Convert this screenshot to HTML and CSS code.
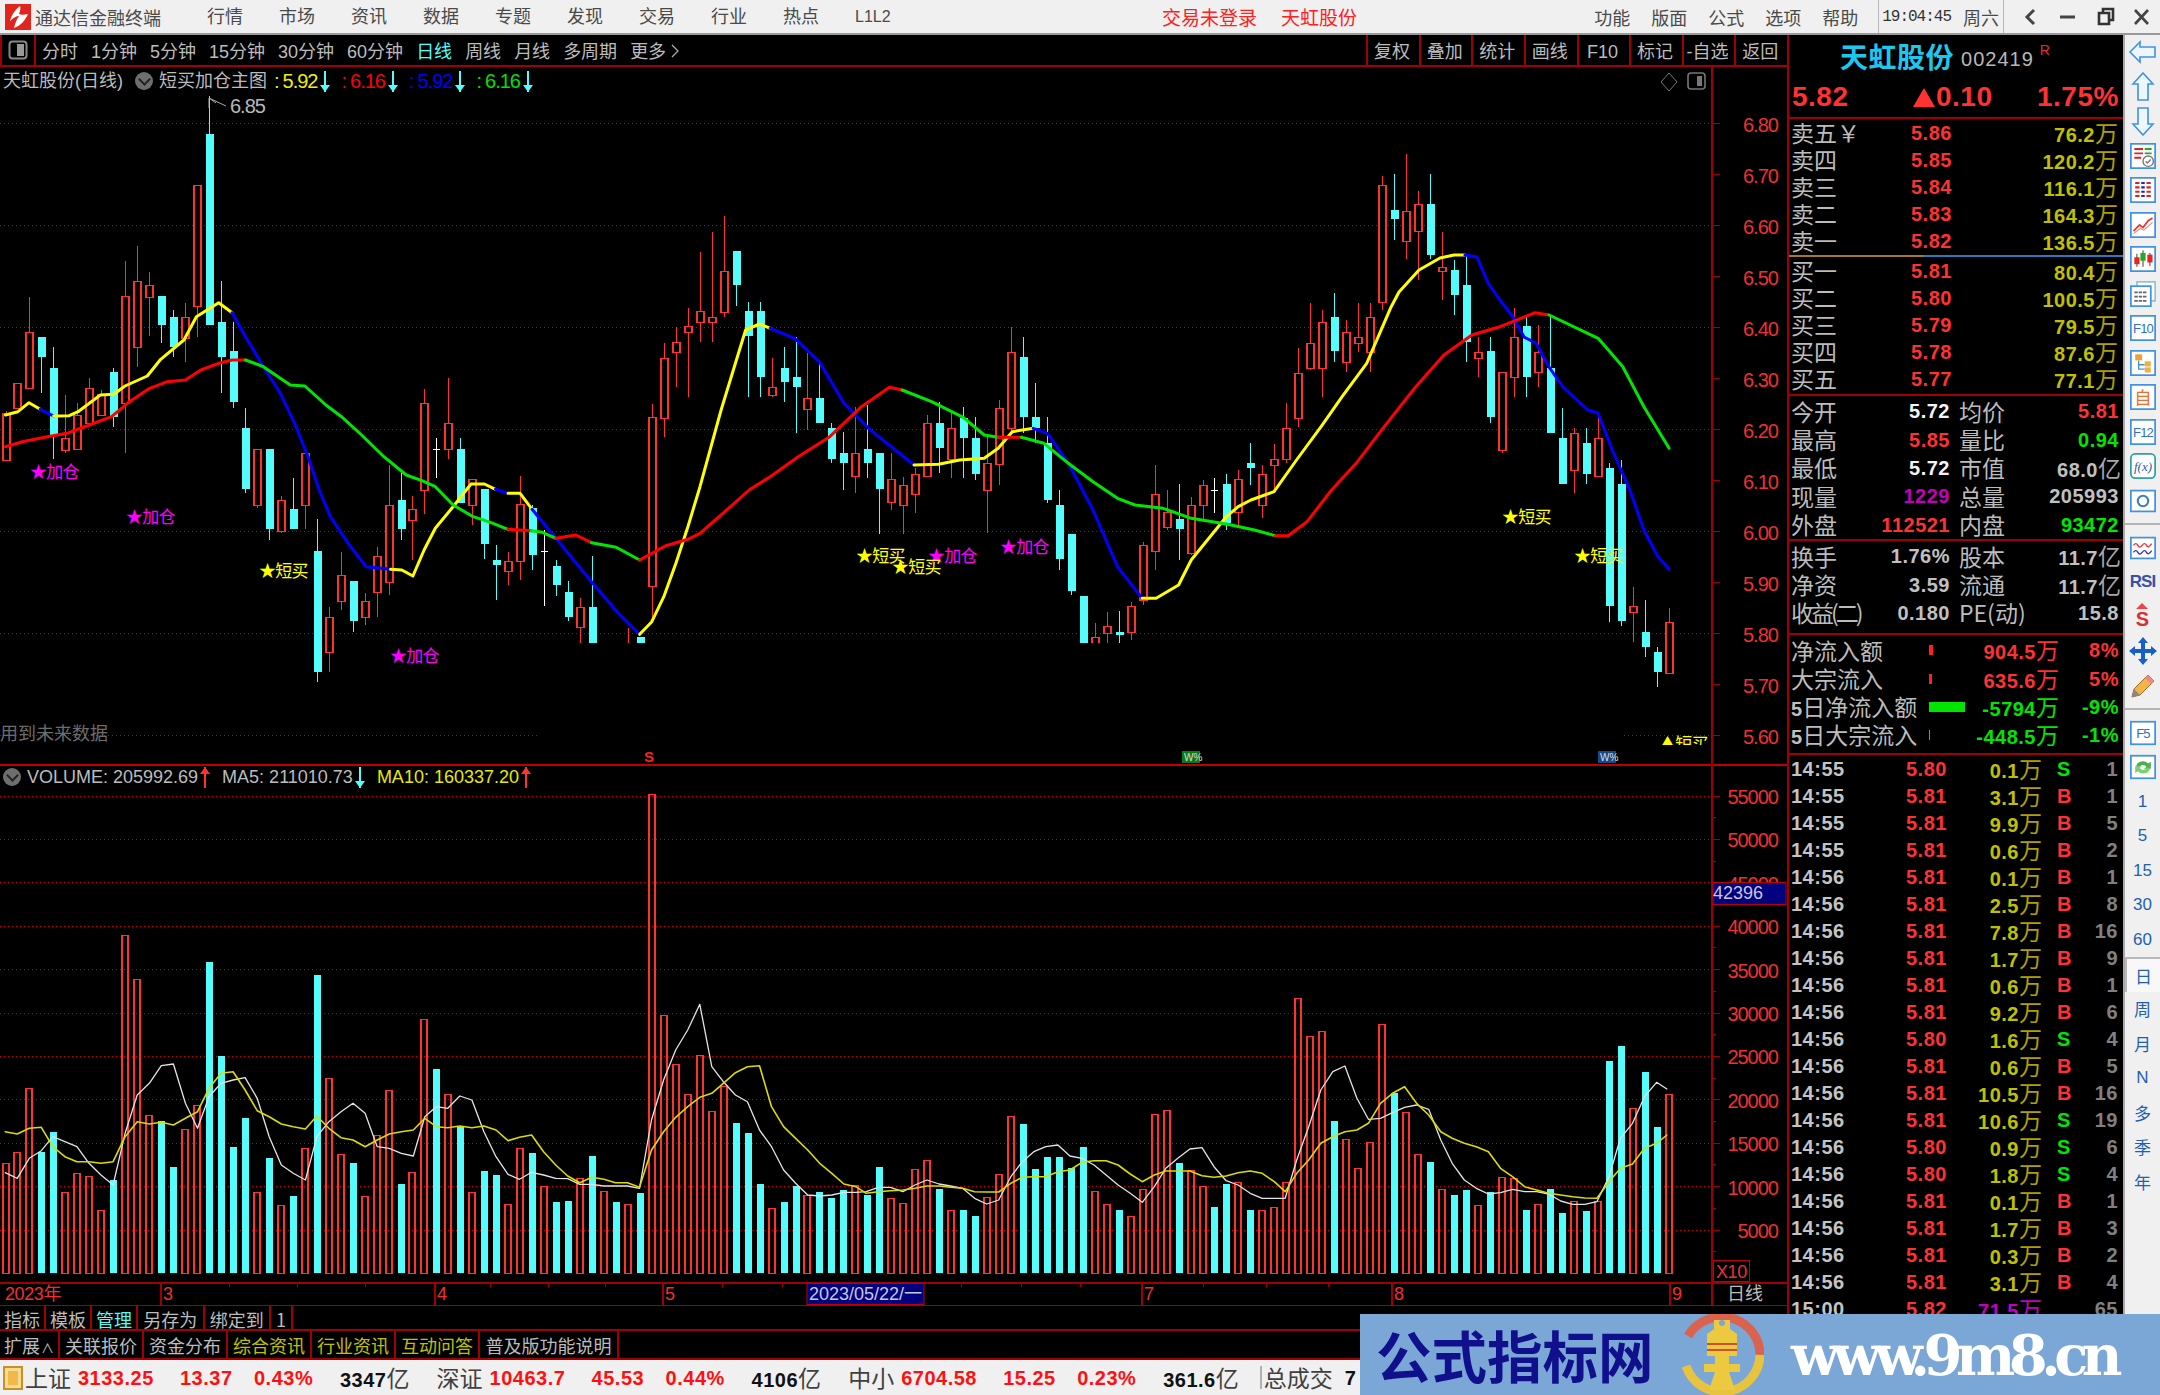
FILE: index.html
```html
<!DOCTYPE html>
<html lang="zh-CN">
<head>
<meta charset="utf-8">
<title>通达信金融终端</title>
<link rel="stylesheet" href="styles.css">
</head>
<body>
<div class="app">
  <header class="topbar">
    <svg class="logo" width="26" height="26" viewBox="0 0 26 26"><rect width="26" height="26" fill="#e0261c"/><path d="M15 2 C10 6 7 10 5 17 C9 13 12 12 14 12 C12 15 10 19 9 24 C15 22 20 17 23 10 C19 11 16 11 14 10 C15 7 16 4 15 2Z" fill="#fff"/></svg>
    <span class="title">通达信金融终端</span>
    <nav class="menu">
      <span>行情</span><span>市场</span><span>资讯</span><span>数据</span><span>专题</span><span>发现</span><span>交易</span><span>行业</span><span>热点</span><span class="l1l2">L1L2</span>
    </nav>
    <span class="alert first">交易未登录</span>
    <span class="alert second">天虹股份</span>
    <div class="topright">
      <nav class="menu2"><span>功能</span><span>版面</span><span>公式</span><span>选项</span><span>帮助</span></nav>
      <div class="clock"><span class="time">19:04:45</span><span>周六</span></div>
      <div class="winbtns">
        <svg width="37" height="24" viewBox="0 0 37 24"><path d="M22 5 L15 12 L22 19" fill="none" stroke="#444" stroke-width="3"/></svg>
        <svg width="37" height="24" viewBox="0 0 37 24"><path d="M11 12 H26" stroke="#444" stroke-width="3"/></svg>
        <svg width="37" height="24" viewBox="0 0 37 24"><path d="M13 8 H23 V19 H13 Z M17 8 V4 H27 V15 H23" fill="none" stroke="#333" stroke-width="2.6"/></svg>
        <svg width="37" height="24" viewBox="0 0 37 24"><path d="M12 5 L25 19 M25 5 L12 19" stroke="#444" stroke-width="2.6"/></svg>
      </div>
    </div>
  </header>

  <div class="workspace">
    <main class="leftcol">
      <div class="toolbar">
        <div class="panelbtn"><svg width="20" height="20" viewBox="0 0 20 20"><rect x="1.5" y="1.5" width="17" height="17" rx="3" fill="none" stroke="#888" stroke-width="2"/><rect x="9" y="4" width="7" height="12" fill="#999"/></svg></div>
        <nav class="periods">
          <span>分时</span><span>1分钟</span><span>5分钟</span><span>15分钟</span><span>30分钟</span><span>60分钟</span><span class="active">日线</span><span>周线</span><span>月线</span><span>多周期</span><span>更多 <svg width="8" height="14" viewBox="0 0 8 14"><path d="M1 1 L7 7 L1 13" fill="none" stroke="#aaa" stroke-width="1.3"/></svg></span>
        </nav>
        <nav class="chartbtns">
          <span>复权</span><span>叠加</span><span>统计</span><span>画线</span><span>F10</span><span>标记</span><span>-自选</span><span>返回</span>
        </nav>
      </div>
      <div class="chartwrap">
        <svg id="chart" width="1787" height="1239" viewBox="0 67 1787 1239"></svg>
        <div class="legend mainlegend">
          <span>天虹股份(日线)</span>
          <i class="chev"></i>
          <span>短买加仓主图</span>
          <span class="val yellow lead"><i class="colon">:</i>5.92</span><i class="arr down"></i>
          <span class="val red"><i class="colon">:</i>6.16</span><i class="arr down"></i>
          <span class="val blue"><i class="colon">:</i>5.92</span><i class="arr down"></i>
          <span class="val green"><i class="colon">:</i>6.16</span><i class="arr down"></i>
        </div>
        <div class="legend vollegend">
          <i class="chev"></i>
          <span class="volt">VOLUME: 205992.69</span><i class="arr up"></i>
          <span class="volt">MA5: 211010.73</span><i class="arr down"></i>
          <span class="volt yellow">MA10: 160337.20</span><i class="arr up"></i>
        </div>
      </div>
      <div class="tools">
        <span>指标</span><span>模板</span><span class="cyan">管理</span><span>另存为</span><span>绑定到</span><span class="one">1</span>
      </div>
      <div class="tabs">
        <span class="t1">扩展<small>∧</small></span><span>关联报价</span><span>资金分布</span><span class="olive">综合资讯</span><span class="olive">行业资讯</span><span class="olive">互动问答</span><span class="t7">普及版功能说明</span>
      </div>
    </main>

    <aside class="panel">
      <section class="head">
        <div class="namerow"><span class="stock">天虹股份</span><span class="code">002419</span><sup class="rflag">R</sup></div>
        <div class="pricerow"><span class="p1">5.82</span><span class="p2"><i class="tri"></i>0.10</span><span class="p3">1.75%</span></div>
      </section>
      <section class="quotes">
        <div class="q"><span class="cn">卖五<span class="yen">￥</span></span><b class="rd">5.86</b><b class="ol">76.2<span class="cn">万</span></b></div>
        <div class="q"><span class="cn">卖四</span><b class="rd">5.85</b><b class="ol">120.2<span class="cn">万</span></b></div>
        <div class="q"><span class="cn">卖三</span><b class="rd">5.84</b><b class="ol">116.1<span class="cn">万</span></b></div>
        <div class="q"><span class="cn">卖二</span><b class="rd">5.83</b><b class="ol">164.3<span class="cn">万</span></b></div>
        <div class="q"><span class="cn">卖一</span><b class="rd">5.82</b><b class="ol">136.5<span class="cn">万</span></b></div>
      </section>
      <div class="split"></div>
      <section class="quotes buy">
        <div class="q"><span class="cn">买一</span><b class="rd">5.81</b><b class="ol">80.4<span class="cn">万</span></b></div>
        <div class="q"><span class="cn">买二</span><b class="rd">5.80</b><b class="ol">100.5<span class="cn">万</span></b></div>
        <div class="q"><span class="cn">买三</span><b class="rd">5.79</b><b class="ol">79.5<span class="cn">万</span></b></div>
        <div class="q"><span class="cn">买四</span><b class="rd">5.78</b><b class="ol">87.6<span class="cn">万</span></b></div>
        <div class="q"><span class="cn">买五</span><b class="rd">5.77</b><b class="ol">77.1<span class="cn">万</span></b></div>
      </section>
      <section class="stats s1">
        <div class="s"><span class="cn">今开</span><b class="wh">5.72</b><span class="cn l2">均价</span><b class="rd">5.81</b></div>
        <div class="s"><span class="cn">最高</span><b class="rd">5.85</b><span class="cn l2">量比</span><b class="gr">0.94</b></div>
        <div class="s"><span class="cn">最低</span><b class="wh">5.72</b><span class="cn l2">市值</span><b class="gy">68.0<span class="cn">亿</span></b></div>
        <div class="s"><span class="cn">现量</span><b class="mg">1229</b><span class="cn l2">总量</span><b class="gy">205993</b></div>
        <div class="s"><span class="cn">外盘</span><b class="rd">112521</b><span class="cn l2">内盘</span><b class="gr">93472</b></div>
      </section>
      <section class="stats s2">
        <div class="s"><span class="cn">换手</span><b class="gy">1.76%</b><span class="cn l2">股本</span><b class="gy">11.7<span class="cn">亿</span></b></div>
        <div class="s"><span class="cn">净资</span><b class="gy">3.59</b><span class="cn l2">流通</span><b class="gy">11.7<span class="cn">亿</span></b></div>
        <div class="s"><span class="cn tight">收益(二)</span><b class="gy">0.180</b><span class="cn l2">PE(动)</span><b class="gy">15.8</b></div>
      </section>
      <section class="flows">
        <div class="f"><span class="cn">净流入额</span><i class="fbar"><i class="fill r" style="width:4px"></i></i><b class="rd">904.5<span class="cn">万</span></b><b class="rd">8%</b></div>
        <div class="f"><span class="cn">大宗流入</span><i class="fbar"><i class="fill r" style="width:3px"></i></i><b class="rd">635.6<span class="cn">万</span></b><b class="rd">5%</b></div>
        <div class="f"><span class="cn"><b class="gy">5</b>日净流入额</span><i class="fbar"><i class="fill g" style="width:36px"></i></i><b class="gr">-5794<span class="cn">万</span></b><b class="gr">-9%</b></div>
        <div class="f"><span class="cn"><b class="gy">5</b>日大宗流入</span><i class="fbar"><i class="fill g" style="width:1px"></i></i><b class="gr">-448.5<span class="cn">万</span></b><b class="gr">-1%</b></div>
      </section>
      <section class="ticks">
        <div class="k"><b>14:55</b><b class="rd">5.80</b><b class="ol">0.1<span class="cn">万</span></b><b class="gr">S</b><b class="ct">1</b></div>
        <div class="k"><b>14:55</b><b class="rd">5.81</b><b class="ol">3.1<span class="cn">万</span></b><b class="rd">B</b><b class="ct">1</b></div>
        <div class="k"><b>14:55</b><b class="rd">5.81</b><b class="ol">9.9<span class="cn">万</span></b><b class="rd">B</b><b class="ct">5</b></div>
        <div class="k"><b>14:55</b><b class="rd">5.81</b><b class="ol">0.6<span class="cn">万</span></b><b class="rd">B</b><b class="ct">2</b></div>
        <div class="k"><b>14:56</b><b class="rd">5.81</b><b class="ol">0.1<span class="cn">万</span></b><b class="rd">B</b><b class="ct">1</b></div>
        <div class="k"><b>14:56</b><b class="rd">5.81</b><b class="ol">2.5<span class="cn">万</span></b><b class="rd">B</b><b class="ct">8</b></div>
        <div class="k"><b>14:56</b><b class="rd">5.81</b><b class="ol">7.8<span class="cn">万</span></b><b class="rd">B</b><b class="ct">16</b></div>
        <div class="k"><b>14:56</b><b class="rd">5.81</b><b class="ol">1.7<span class="cn">万</span></b><b class="rd">B</b><b class="ct">9</b></div>
        <div class="k"><b>14:56</b><b class="rd">5.81</b><b class="ol">0.6<span class="cn">万</span></b><b class="rd">B</b><b class="ct">1</b></div>
        <div class="k"><b>14:56</b><b class="rd">5.81</b><b class="ol">9.2<span class="cn">万</span></b><b class="rd">B</b><b class="ct">6</b></div>
        <div class="k"><b>14:56</b><b class="rd">5.80</b><b class="ol">1.6<span class="cn">万</span></b><b class="gr">S</b><b class="ct">4</b></div>
        <div class="k"><b>14:56</b><b class="rd">5.81</b><b class="ol">0.6<span class="cn">万</span></b><b class="rd">B</b><b class="ct">5</b></div>
        <div class="k"><b>14:56</b><b class="rd">5.81</b><b class="ol">10.5<span class="cn">万</span></b><b class="rd">B</b><b class="ct">16</b></div>
        <div class="k"><b>14:56</b><b class="rd">5.81</b><b class="ol">10.6<span class="cn">万</span></b><b class="gr">S</b><b class="ct">19</b></div>
        <div class="k"><b>14:56</b><b class="rd">5.80</b><b class="ol">0.9<span class="cn">万</span></b><b class="gr">S</b><b class="ct">6</b></div>
        <div class="k"><b>14:56</b><b class="rd">5.80</b><b class="ol">1.8<span class="cn">万</span></b><b class="gr">S</b><b class="ct">4</b></div>
        <div class="k"><b>14:56</b><b class="rd">5.81</b><b class="ol">0.1<span class="cn">万</span></b><b class="rd">B</b><b class="ct">1</b></div>
        <div class="k"><b>14:56</b><b class="rd">5.81</b><b class="ol">1.7<span class="cn">万</span></b><b class="rd">B</b><b class="ct">3</b></div>
        <div class="k"><b>14:56</b><b class="rd">5.81</b><b class="ol">0.3<span class="cn">万</span></b><b class="rd">B</b><b class="ct">2</b></div>
        <div class="k"><b>14:56</b><b class="rd">5.81</b><b class="ol">3.1<span class="cn">万</span></b><b class="rd">B</b><b class="ct">4</b></div>
        <div class="k"><b>15:00</b><b class="rd">5.82</b><b class="mg">71.5<span class="cn">万</span></b><b></b><b class="ct">65</b></div>
      </section>
    </aside>

    <aside class="sidebar">
      <div class="ti"><svg width="30" height="24" viewBox="0 0 30 24"><path d="M2 12 L12 2 V7 H27 V17 H12 V22 Z" fill="#eef6ff" stroke="#3f93e0" stroke-width="1.6"/></svg></div>
      <div class="ti"><svg width="24" height="30" viewBox="0 0 24 30"><path d="M12 1 L22 12 H17 V28 H7 V12 H2 Z" fill="#eef6ff" stroke="#3f93e0" stroke-width="1.6"/></svg></div>
      <div class="ti"><svg width="24" height="30" viewBox="0 0 24 30"><path d="M12 29 L22 18 H17 V2 H7 V18 H2 Z" fill="#eef6ff" stroke="#3f93e0" stroke-width="1.6"/></svg></div>
      <div class="ti"><svg class="box" viewBox="0 0 30 30"><rect x="1" y="1" width="28" height="28" fill="#fff" stroke="#3f93e0" stroke-width="2"/><path d="M5 7h10M5 12h10M5 17h8" stroke="#d22" stroke-width="2.2"/><path d="M17 7h8M17 12h8" stroke="#2a2" stroke-width="2.2"/><circle cx="21" cy="21" r="6" fill="#fff" stroke="#777" stroke-width="1.6"/><path d="M18 21l2 2 4-4" fill="none" stroke="#777" stroke-width="1.6"/></svg></div>
      <div class="ti"><svg class="box" viewBox="0 0 30 30"><rect x="1" y="1" width="28" height="28" fill="#fff" stroke="#3f93e0" stroke-width="2"/><path d="M6 7h5M6 12h5M6 17h5M6 22h5" stroke="#d22" stroke-width="2.4"/><path d="M13 7h4M13 12h4M13 17h4M13 22h4" stroke="#22a" stroke-width="2.4"/><path d="M19 7h5M19 12h5M19 17h5M19 22h5" stroke="#d22" stroke-width="2.4"/></svg></div>
      <div class="ti"><svg class="box" viewBox="0 0 30 30"><rect x="1" y="1" width="28" height="28" fill="#fff" stroke="#3f93e0" stroke-width="2"/><path d="M4 22 L11 15 L15 18 L21 10 L26 7" fill="none" stroke="#e33" stroke-width="2"/><path d="M4 25 L12 19 L16 21 L26 12" fill="none" stroke="#e88" stroke-width="1.2"/></svg></div>
      <div class="ti"><svg class="box" viewBox="0 0 30 30"><rect x="1" y="1" width="28" height="28" fill="#fff" stroke="#3f93e0" stroke-width="2"/><path d="M8 9v15M15 5v19M23 8v15" stroke="#222" stroke-width="1"/><rect x="5" y="13" width="6" height="8" fill="#e22"/><rect x="12" y="8" width="6" height="9" fill="#2a2"/><rect x="20" y="10" width="6" height="9" fill="#e22"/></svg></div>
      <div class="ti"><svg class="box" viewBox="0 0 30 30"><rect x="8" y="1" width="21" height="22" fill="#fff" stroke="#7fb2e0" stroke-width="1.6"/><rect x="1" y="6" width="23" height="23" fill="#fff" stroke="#3f93e0" stroke-width="2"/><path d="M5 13h15M5 18h15M5 23h15" stroke="#666" stroke-width="2" stroke-dasharray="4 1"/></svg></div>
      <div class="ti"><svg class="box" viewBox="0 0 30 30"><rect x="1" y="1" width="28" height="28" fill="#fff" stroke="#3f93e0" stroke-width="2"/><text x="15" y="21" class="ict">F10</text></svg></div>
      <div class="ti"><svg class="box" viewBox="0 0 30 30"><rect x="1" y="1" width="28" height="28" fill="#fff" stroke="#3f93e0" stroke-width="2"/><path d="M10 12V22H17M10 17H17" fill="none" stroke="#3f93e0" stroke-width="1.5"/><rect x="6" y="5" width="8" height="7" fill="#f0a030"/><rect x="17" y="13" width="7" height="6" fill="#f0b040"/><rect x="17" y="20" width="7" height="6" fill="#f0b040"/></svg></div>
      <div class="ti"><svg class="box" viewBox="0 0 30 30"><rect x="1" y="1" width="28" height="28" fill="#fff" stroke="#3f93e0" stroke-width="2"/><text x="15" y="23" class="icz">自</text></svg></div>
      <div class="ti"><svg class="box" viewBox="0 0 30 30"><rect x="1" y="1" width="28" height="28" fill="#fff" stroke="#3f93e0" stroke-width="2"/><text x="15" y="21" class="ict">F12</text></svg></div>
      <div class="ti"><svg class="box" viewBox="0 0 30 30"><rect x="1" y="1" width="28" height="28" rx="5" fill="#fff" stroke="#30a0a0" stroke-width="2"/><text x="15" y="21" class="icf">f(x)</text></svg></div>
      <div class="ti"><svg class="box" viewBox="0 0 30 30"><rect x="1" y="3" width="28" height="24" fill="#fff" stroke="#3f93e0" stroke-width="2"/><circle cx="15" cy="15" r="6" fill="none" stroke="#3f7fc0" stroke-width="2.4"/></svg></div>
      <div class="tsep"></div>
      <div class="ti"><svg class="box" viewBox="0 0 30 30"><rect x="1" y="3" width="28" height="24" fill="#fff" stroke="#3f93e0" stroke-width="2"/><path d="M4 12q3-4 5 0t5 0 5 0 6-2" fill="none" stroke="#e33" stroke-width="1.6"/><path d="M4 20q3-4 5 0t5 0 5 0 6-2" fill="none" stroke="#33c" stroke-width="1.6"/></svg></div>
      <div class="ti txt rsi">RSI</div>
      <div class="ti dollar"><i class="up-tip"></i>S</div>
      <div class="ti"><svg width="28" height="28" viewBox="0 0 28 28"><path d="M14 0 L19 6 H16 V12 H22 V9 L28 14 L22 19 V16 H16 V22 H19 L14 28 L9 22 H12 V16 H6 V19 L0 14 L6 9 V12 H12 V6 H9 Z" fill="#1560c8"/></svg></div>
      <div class="ti"><svg width="26" height="26" viewBox="0 0 26 26"><path d="M2 24 L4 16 L18 2 L24 8 L10 22 Z" fill="#f3b54a" stroke="#a06c20"/><path d="M18 2 L24 8 L21 11 L15 5Z" fill="#e88"/><path d="M2 24 L4 16 L10 22 Z" fill="#888"/></svg></div>
      <div class="tsep"></div>
      <div class="ti"><svg class="box" viewBox="0 0 30 30"><rect x="1" y="2" width="28" height="26" fill="#fff" stroke="#3f93e0" stroke-width="2"/><text x="15" y="21" class="ict">F5</text></svg></div>
      <div class="ti"><svg class="box" viewBox="0 0 30 30"><rect x="1" y="2" width="28" height="26" fill="#fff" stroke="#3f93e0" stroke-width="2"/><path d="M7 14a8 7 0 0 1 14-3l3-2v8h-8l3-2a5 5 0 0 0-9 1Z" fill="#4cb050"/><path d="M23 17a8 7 0 0 1-14 3l-3 2v-8h8l-3 2a5 5 0 0 0 9-1Z" fill="#7ccf70"/></svg></div>
      <div class="ti txt">1</div><div class="ti txt">5</div><div class="ti txt">15</div><div class="ti txt">30</div><div class="ti txt">60</div>
      <div class="ti txt sel">日</div><div class="ti txt">周</div><div class="ti txt">月</div><div class="ti txt">N</div><div class="ti txt">多</div><div class="ti txt">季</div><div class="ti txt">年</div>
    </aside>
  </div>

  <footer class="statusbar">
    <i class="sicon"></i>
    <span class="n cn">上证</span><b class="v">3133.25</b><b class="c">13.37</b><b class="pc">0.43%</b><b class="a">3347<span class="cn">亿</span></b>
    <span class="n cn">深证</span><b class="v">10463.7</b><b class="c">45.53</b><b class="pc">0.44%</b><b class="a">4106<span class="cn">亿</span></b>
    <span class="n cn">中小</span><b class="v">6704.58</b><b class="c">15.25</b><b class="pc">0.23%</b><b class="a">361.6<span class="cn">亿</span></b>
    <span class="total cn">总成交</span><b class="a tv">7</b>
  </footer>

  <div class="watermark">
    <span class="wm-cn">公式指标网</span>
    <svg class="wm-logo" width="84" height="81" viewBox="0 0 84 81">
      <path d="M42 3 A38 38 0 0 1 80 41" fill="none" stroke="#d9634f" stroke-width="9"/>
      <path d="M42 3 A38 38 0 0 0 8 22" fill="none" stroke="#d9634f" stroke-width="9"/>
      <path d="M80 41 A38 38 0 0 1 6 52" fill="none" stroke="#e8c340" stroke-width="9"/>
      <path d="M34 6 H50 V15 L57 20 V42 H49 V50 H60 V58 H49 L55 76 H29 L35 58 H24 V50 H35 V42 H27 V20 L34 15 Z" fill="#ecc93f"/>
      <circle cx="42" cy="9" r="3" fill="#7ba7d7"/>
      <path d="M27 30 H57 M27 36 H57" stroke="#c9522f" stroke-width="2"/>
    </svg>
    <span class="wm-url">www.9m8.cn</span>
  </div>
</div>
<script src="chart.js"></script>
</body>
</html>
```
FILE: styles.css
```css
* { box-sizing: border-box; }
html, body { margin: 0; width: 2160px; height: 1395px; overflow: hidden; background: #000; }
body { font-family: "Noto Sans CJK SC", "Liberation Sans", sans-serif; }
i { display: inline-block; font-style: normal; }
b { font-weight: 700; }

.app { position: relative; width: 2160px; height: 1395px; display: flex; flex-direction: column; }

/* title bar */
.topbar { height: 35px; flex: none; display: flex; align-items: center; background: #f0f0f0; border-bottom: 2px solid #9a9a9a; color: #4a4a4a; font-size: 18px; line-height: 1; }
.logo { margin-left: 5px; flex: none; }
.title { margin-left: 4px; width: 126px; white-space: nowrap; }
.menu { margin-left: 46px; display: flex; gap: 36px; width: 685px; align-items: center; font-family: "Liberation Sans", "Noto Sans CJK SC", sans-serif; }
.menu span, .menu2 span { width: 36px; white-space: nowrap; }
.menu .l1l2 { font-size: 16px; }
.alert { color: #ff2020; font-size: 19px; white-space: nowrap; }
.alert.first { margin-left: 270px; }
.alert.second { margin-left: 24px; }
.topright { margin-left: auto; display: flex; align-items: center; height: 100%; }
.menu2 { display: flex; gap: 21px; padding-right: 20px; }
.clock { display: flex; align-items: center; height: 100%; padding: 0 4px 0 3px; gap: 12px; border-left: 1px solid #b8b8b8; border-right: 1px solid #b8b8b8; }
.time { font-family: "Liberation Mono", monospace; font-size: 16px; letter-spacing: -1px; color: #333; }
.winbtns { display: flex; margin-left: 8px; margin-right: 0; }

.workspace { height: 1325px; flex: none; display: flex; }
.leftcol { width: 1787px; flex: none; display: flex; flex-direction: column; }

/* period toolbar */
.toolbar { height: 32px; flex: none; display: flex; align-items: stretch; border-bottom: 2px solid #a00000; color: #bcbcbc; font-size: 18px; line-height: 34px; font-family: "Liberation Sans", "Noto Sans CJK SC", sans-serif; }
.panelbtn { width: 36px; border-right: 2px solid #a00000; border-left: 2px solid #a00000; display: flex; align-items: center; justify-content: center; }
.periods { margin-left: 6px; display: flex; gap: 13px; white-space: nowrap; }
.periods .active { color: #54fcfc; }
.chartbtns { margin-left: auto; display: flex; white-space: nowrap; }
.chartbtns span { width: 52.6px; padding-right: 3px; text-align: center; border-left: 2px solid #a00000; }

/* chart canvas */
.chartwrap { position: relative; height: 1239px; flex: none; }
#chart { display: block; }
.legend { position: absolute; display: flex; align-items: center; white-space: nowrap; height: 22px; color: #bcbcbc; font-size: 18px; line-height: 1; font-family: "Liberation Sans", "Noto Sans CJK SC", sans-serif; }
.mainlegend { left: 3px; top: 3px; }
.vollegend { left: 3px; top: 699px; }
.chev { width: 18px; height: 18px; margin: 0 6px 0 12px; border-radius: 50%; background: #6e6e6e; position: relative; flex: none; }
.chev::after { content: ""; position: absolute; left: 5px; top: 3px; width: 7px; height: 7px; border-right: 2px solid #222; border-bottom: 2px solid #222; transform: rotate(45deg); }
.vollegend .chev { margin: 0 6px 0 0; }
.val { font-size: 20px; letter-spacing: -1px; margin-left: 15.5px; width: 44px; }
.val.lead { margin-left: 7px; }
.colon { margin-right: 4px; }
.yellow { color: #ffff00; }
.val.yellow { color: #f0f000; }
.val.red { color: #ff0000; }
.val.blue { color: #0000ff; }
.val.green { color: #00e000; }
.volt { font-family: "Liberation Sans", sans-serif; font-size: 18px; }
.vollegend .yellow { color: #e8e800; }
.arr { width: 2px; height: 21px; position: relative; flex: none; margin-left: 6px; }
.arr::after { content: ""; position: absolute; left: -4px; border-left: 5px solid transparent; border-right: 5px solid transparent; }
.arr.down { background: #54fcfc; }
.arr.down::after { bottom: 0; border-top: 7px solid #54fcfc; }
.arr.up { background: #ff3232; margin-right: 16px; }
.arr.up::after { top: 0; border-bottom: 7px solid #ff3232; }
.vollegend .arr.down { margin-right: 16px; }
.mainlegend .arr { margin-right: 0; }

.g-text { font-family: "Liberation Sans", sans-serif; font-size: 20px; letter-spacing: -1px; fill: #f03030; }
.g-date { font-family: "Liberation Sans", "Noto Sans CJK SC", sans-serif; font-size: 18px; fill: #f03030; letter-spacing: -0.4px; }
.g-sel { fill: #c8c8d8; font-size: 18px; font-family: "Liberation Sans", "Noto Sans CJK SC", sans-serif; }
.g-gray { font-family: "Noto Sans CJK SC", sans-serif; font-size: 18px; fill: #6c6c6c; }
.g-top { font-family: "Liberation Sans", sans-serif; font-size: 20px; letter-spacing: -1px; fill: #b8b8b8; }
.g-lab { font-family: "Noto Sans CJK SC", sans-serif; font-size: 18px; fill: #bcbcbc; }
.sig { font-family: "Noto Sans CJK SC", sans-serif; font-size: 17px; letter-spacing: -0.8px; }
.sig.y { fill: #ffff00; }
.sig.m { fill: #ff00ff; }
.g-s { font-family: "Liberation Sans", sans-serif; font-weight: 700; font-size: 15px; fill: #ff2020; }
.g-box { font-family: "Liberation Sans", sans-serif; font-size: 10px; fill: #ddd; }

/* bottom rows */
.tools, .tabs { display: flex; flex: none; border-bottom: 2px solid #a00000; color: #bcbcbc; font-size: 18px; white-space: nowrap; }
.tools { height: 25px; line-height: 26px; }
.tabs { height: 29px; line-height: 29px; }
.tools span, .tabs span { padding: 0 4px; border-right: 2px solid #a00000; text-align: center; }
.tools span { width: 46px; }
.tools span:nth-child(4), .tools span:nth-child(5) { width: 66.5px; }
.tools .one { width: 22px; padding: 0; }
.tools .cyan { color: #54fcfc; }
.tabs span { width: 84px; }
.tabs .t1 { width: 60px; padding: 0 2px; }
.tabs .t1 small { font-size: 13px; margin-left: 1px; }
.tabs .t7 { width: 139px; }
.tabs .olive { color: #c0c000; }

/* quote panel */
.panel { width: 336px; flex: none; border-left: 2px solid #a00000; color: #bcbcbc; overflow: hidden; font-family: "Liberation Sans", sans-serif; font-size: 20px; letter-spacing: 0.5px; line-height: 1; }
.cn { font-family: "Noto Sans CJK SC", sans-serif; font-size: 23px; font-weight: 400; letter-spacing: 0; line-height: 1; }
.rd { color: #ff3232; } .ol { color: #c0c000; } .gr { color: #00e600; } .wh { color: #f4f4f4; } .gy { color: #c0c0c0; } .mg { color: #c000c0; }
.ol .cn { color: #b0a000; letter-spacing: -2px; }
.rd .cn, .gr .cn { letter-spacing: -2px; }
.gy .cn { letter-spacing: -2px; color: #a8a8a8; }
.mg .cn { letter-spacing: -2px; }
.tight { letter-spacing: -3px; }

.head { height: 84px; border-bottom: 2px solid #a00000; }
.namerow { height: 42px; padding-left: 51px; display: flex; align-items: center; }
.stock { color: #1cc8f0; font-family: "Noto Sans CJK SC", sans-serif; font-size: 28px; font-weight: 700; letter-spacing: 0.5px; line-height: 1; white-space: nowrap; }
.code { margin-left: 7px; font-size: 20px; letter-spacing: 1px; color: #b8b8b8; margin-top: 6px; }
.rflag { color: #e03030; font-size: 14px; letter-spacing: 0; margin: -12px 0 0 6px; font-family: "Liberation Sans", sans-serif; }
.pricerow { height: 40px; display: flex; align-items: center; color: #ff3232; font-family: "Liberation Sans", sans-serif; font-weight: 700; font-size: 28px; letter-spacing: 0.5px; white-space: nowrap; }
.p1 { margin-left: 3px; width: 121px; }
.p2 { width: 124px; display: flex; align-items: center; }
.tri { width: 0; height: 0; border-left: 11px solid transparent; border-right: 11px solid transparent; border-bottom: 19px solid #ff3232; margin-right: 1px; }

.quotes { padding-bottom: 1px; }
.q { height: 27px; display: grid; grid-template-columns: 120px 100px 105px; align-items: center; padding-left: 2px; white-space: nowrap; }
.q > :last-child { text-align: right; }
.yen { color: #bcbcbc; }
.split { height: 2px; background: linear-gradient(90deg, #a87820 0 135px, #2f78b8 135px); }
.buy { padding-bottom: 0; border-bottom: 2px solid #a00000; height: 139px; }

.stats { padding-top: 1px; border-bottom: 2px solid #a00000; }
.s { height: 28.4px; display: grid; grid-template-columns: 50px 109px 59px 110px; align-items: center; padding-left: 2px; white-space: nowrap; }
.s > b { text-align: right; }
.s .l2 { padding-left: 9px; }
.s1 { height: 145px; }
.s2 { height: 94px; }

.flows { height: 120px; padding-top: 1px; border-bottom: 2px solid #a00000; }
.f { height: 28.4px; display: grid; grid-template-columns: 138px 36px 92px 62px; align-items: center; padding-left: 2px; white-space: nowrap; }
.f > b { text-align: right; }
.f .cn b { font-family: "Liberation Sans", sans-serif; font-size: 20px; }
.fbar { height: 10px; display: block; }
.fill { display: block; height: 10px; }
.fill.r { background: #ff2020; }
.fill.g { background: #00e600; }

.k { height: 27px; display: grid; grid-template-columns: 115px 64px 70px 37px 41px; align-items: center; padding-left: 2px; color: #c4c4c4; white-space: nowrap; }
.k > b:nth-child(3) { text-align: right; }
.k > b:nth-child(4) { padding-left: 17px; }
.k > b:nth-child(5) { text-align: right; }
.k .ct { color: #808080; }

/* sidebar */
.sidebar { flex: none; width: 37px; background: #f0f0f0; border-left: 2px solid #a8a8a8; overflow: hidden; color: #1f5fb0; }
.ti { height: 34.5px; display: flex; align-items: center; justify-content: center; font-family: "Liberation Sans", "Noto Sans CJK SC", sans-serif; }
.box { width: 26px; height: 26px; }
.txt { font-size: 17px; }
.rsi { font-weight: 700; font-size: 17px; color: #3850a8; letter-spacing: -1px; }
.dollar { position: relative; color: #d83030; font-size: 20px; font-weight: 700; padding-top: 6px; }
.up-tip { position: absolute; left: 11px; top: 3px; width: 0; height: 0; border-left: 6px solid transparent; border-right: 6px solid transparent; border-bottom: 6px solid #e44; }
.sel { background: #f8f8f8; border-top: 2px solid #b8b8b8; border-left: 2px solid #b8b8b8; }
.tsep { height: 12.5px; display: flex; align-items: center; }
.tsep::before { content: ""; display: block; width: 100%; height: 2px; background: #b4b4b4; }
.ict { font-family: "Liberation Sans", sans-serif; font-size: 15px; fill: #2f70c0; text-anchor: middle; letter-spacing: -1px; }
.icz { font-family: "Noto Sans CJK SC", sans-serif; font-size: 20px; fill: #e8702a; text-anchor: middle; }
.icf { font-family: "Liberation Serif", serif; font-size: 15px; font-style: italic; fill: #2f60a0; text-anchor: middle; }

/* status bar */
.statusbar { height: 35px; flex: none; display: flex; align-items: center; background: #f0f0f0; white-space: nowrap; font-family: "Liberation Sans", sans-serif; font-size: 20px; letter-spacing: 0.5px; color: #ff1010; line-height: 1; }
.sicon { width: 20px; height: 24px; margin: 0 2px 0 3px; background: #f2b84a; border: 2px solid #c89028; box-shadow: inset 0 0 0 3px #f8dc90; flex: none; }
.statusbar .cn { color: #404040; }
.n { width: 53px; flex: none; }
.v { width: 102px; flex: none; }
.c { width: 74px; flex: none; }
.pc { width: 86px; flex: none; }
.a { width: 96.6px; flex: none; color: #111; }
.a .cn { letter-spacing: -2px; }
.total { width: 85px; border-left: 2px solid #b0b0b0; padding-left: 2px; flex: none; }

/* watermark */
.watermark { position: absolute; left: 1360px; top: 1314px; width: 800px; height: 81px; background: #7ba7d7; display: flex; align-items: center; overflow: hidden; }
.wm-cn { margin-left: 16px; width: 296px; color: #10108c; font-family: "Noto Sans CJK SC", sans-serif; font-weight: 700; font-size: 55.5px; line-height: 1; white-space: nowrap; }
.wm-logo { margin-left: 8px; flex: none; }
.wm-url { margin-left: 27px; color: #fff; font-family: "DejaVu Serif", serif; font-weight: 700; font-size: 56px; letter-spacing: -6.5px; line-height: 1; white-space: nowrap; }
```
FILE: chart.js
```js
(function () {
  var NS = 'http://www.w3.org/2000/svg';
  var svg = document.getElementById('chart');
  var RED = '#ff3232', CYAN = '#54fcfc', DARK = '#a00000', GRID = '#c80000';

  function el(name, attrs, text, parent) {
    var n = document.createElementNS(NS, name);
    for (var k in attrs) n.setAttribute(k, attrs[k]);
    if (text != null) n.textContent = text;
    (parent || svg).appendChild(n);
    return n;
  }
  function line(x1, y1, x2, y2, color, w, dash) {
    var a = { x1: x1, y1: y1, x2: x2, y2: y2, stroke: color, 'stroke-width': w || 1, 'shape-rendering': 'crispEdges' };
    if (dash) a['stroke-dasharray'] = dash;
    el('line', a);
  }
  function X(i) { return Math.round(5.5 + 11.97 * i); }

  // grid
  var i, y;
  for (i = 0; i < 7; i++) { y = 123.5 + 102 * i; line(0, y, 1711, y, GRID, 1, '1 3'); }
  for (i = 0; i < 11; i++) { y = 796 + 43.4 * i; line(0, y, 1711, y, GRID, 1, '1 3'); }

  // candles: high, body top, body bottom, low, kind (0 up, 1 down, 2 doji)
  var candles = [
    [411,413,460,460,0],[383,383,408,408,0],[297,332,388,388,0],[337,337,357,393,1],[347,368,436,459,1],
    [395,438,450,453,0],[403,415,449,450,0],[378,388,423,423,0],[390,394,415,415,0],[368,372,417,427,1],
    [261,296,403,453,0],[246,281,347,367,0],[272,285,297,336,0],[296,296,325,343,1],[310,317,347,357,1],
    [303,317,338,362,0],[185,185,306,337,0],[96,134,325,325,1],[281,322,357,393,1],[322,351,402,408,1],
    [408,428,489,493,1],[449,449,505,508,0],[449,449,529,540,1],[496,500,531,533,0],[478,509,529,529,1],
    [453,453,505,529,0],[519,551,672,682,1],[607,617,652,672,0],[552,575,601,610,0],[581,581,621,632,1],
    [593,601,617,625,0],[547,556,592,617,0],[465,505,582,595,0],[473,500,529,540,1],[496,509,520,560,0],
    [389,403,490,514,0],[438,449,450,478,2],[378,423,449,459,0],[438,449,503,503,1],[479,479,505,525,0],
    [489,489,544,559,1],[545,560,565,600,1],[552,561,571,585,0],[476,504,561,580,0],[505,508,555,570,1],
    [530,551,552,606,2],[560,566,585,596,1],[581,592,617,621,1],[598,607,627,643,0],[556,607,660,670,1],
    [660,665,670,680,0],[660,665,670,680,0],[628,650,655,665,0],[637,637,650,655,1],[404,417,586,623,0],
    [343,358,418,437,0],[327,342,352,387,0],[308,326,332,397,0],[252,311,322,342,0],[232,317,322,342,0],
    [216,271,312,317,0],[251,251,285,306,1],[302,311,336,397,1],[302,311,377,397,1],[358,387,395,397,0],
    [347,368,382,402,1],[337,377,387,433,1],[353,398,409,430,0],[362,398,423,423,1],[423,428,459,463,1],
    [432,453,463,490,1],[407,453,476,493,0],[405,449,463,478,1],[453,453,489,534,1],[453,479,502,510,0],
    [477,485,505,534,0],[468,474,494,513,0],[415,423,476,477,0],[402,423,448,473,1],[413,428,459,478,0],
    [407,418,438,478,1],[417,438,474,480,1],[437,463,490,533,0],[400,408,464,485,0],[327,352,428,433,0],
    [337,357,417,433,1],[383,417,428,443,1],[417,443,500,503,1],[490,505,559,570,1],[534,534,591,595,1],
    [596,596,660,670,1],[623,637,650,660,0],[612,626,633,643,0],[611,632,635,643,1],[602,606,632,640,0],
    [542,545,600,605,0],[465,494,551,570,0],[490,512,527,530,0],[484,519,529,560,1],[497,505,553,555,0],
    [480,485,505,520,0],[478,490,491,513,2],[474,484,523,530,1],[470,479,512,527,0],[443,463,468,485,1],
    [465,474,505,518,0],[444,459,465,493,0],[403,428,459,463,0],[348,373,418,427,0],[303,343,368,370,0],
    [310,322,368,397,0],[293,317,351,362,1],[320,332,362,372,0],[303,337,343,352,0],[303,317,352,372,0],
    [176,185,302,310,0],[174,210,219,240,1],[154,211,241,259,0],[191,204,231,280,0],[174,204,255,259,1],
    [232,267,271,300,0],[260,270,295,315,1],[255,285,342,362,1],[337,352,358,377,0],[337,351,417,423,1],
    [372,372,450,453,0],[308,337,377,397,0],[315,326,377,397,1],[325,352,372,387,0],[315,368,433,433,1],
    [408,438,484,484,1],[428,433,470,493,0],[428,443,474,484,1],[415,438,476,476,0],[463,468,606,622,1],
    [460,484,621,626,1],[587,606,612,642,0],[600,632,647,657,1],[647,652,672,687,1],[608,622,673,673,0]
  ];
  candles.forEach(function (c, idx) {
    var x = X(idx), col = c[4] === 0 ? RED : c[4] === 1 ? CYAN : '#ffffff';
    line(x + 0.5, c[0], x + 0.5, c[3], col, 1);
    if (c[4] === 2) { line(x - 3, c[1] + 0.5, x + 4, c[1] + 0.5, col, 1); return; }
    if (c[4] === 0) {
      el('rect', { x: x - 3, y: c[1] + 0.5, width: 7, height: c[2] - c[1], fill: '#000', stroke: RED, 'stroke-width': 1.4, 'shape-rendering': 'crispEdges' });
    } else {
      el('rect', { x: x - 3.5, y: c[1], width: 8, height: c[2] - c[1], fill: CYAN, 'shape-rendering': 'crispEdges' });
    }
  });

  // band below the candles that the terminal blanks out
  el('rect', { x: 540, y: 643, width: 1083, height: 118, fill: '#000' });

  // traced point lists are stored per traced strip
  var A = function (p) { return p.map(function (q) { return [q[0] / 2.24, 300 + q[1] / 3]; }); };
  var B = function (p) { return p.map(function (q) { return [700 + q[0] / 1.425, 300 + q[1] / 3]; }); };
  function poly(pts, color, w) {
    el('polyline', { points: pts.map(function (p) { return p[0].toFixed(1) + ',' + p[1].toFixed(1); }).join(' '), fill: 'none', stroke: color, 'stroke-width': w, 'stroke-linejoin': 'round', 'stroke-linecap': 'round' });
  }
  var Y = '#ffff00', BL = '#0000ff', RR = '#ff0000', G = '#00e600';

  // fast line
  poly(A([[12,345],[40,335],[65,308],[90,328]]), Y, 3);
  poly(A([[90,328],[120,348]]), BL, 3);
  poly(A([[120,348],[155,347],[175,335],[200,310],[225,285],[255,283],[280,258],[330,228],[360,178],[412,120],[440,50],[490,8],[520,38]]), Y, 3);
  poly(A([[520,38],[550,110],[590,200],[628,280],[660,370],[690,470],[715,570],[740,650],[780,730],[820,800],[875,808]]), BL, 3);
  poly(A([[875,808],[900,810],[925,828],[950,750],[975,685],[1015,620],[1055,552],[1085,552],[1110,568]]), Y, 3);
  poly(A([[1110,568],[1138,580]]), BL, 3);
  poly(A([[1138,580],[1165,580],[1192,628]]), Y, 3);
  poly(A([[1192,628],[1245,715],[1325,845],[1385,940],[1433,1003]]), BL, 3);
  poly(A([[1433,1003],[1460,965],[1487,890],[1514,790],[1541,680],[1568,560]]).concat(B([[30,330],[65,90],[85,72],[100,85]])), Y, 3);
  poly(B([[100,85],[135,115],[170,185],[205,310],[240,385],[305,495]]), BL, 3);
  poly(B([[305,495],[340,493],[370,480],[405,475],[425,445],[445,395],[475,385]]), Y, 3);
  poly(B([[475,385],[495,400],[525,490],[560,630],[595,800],[630,895]]), BL, 3);
  poly(B([[630,895],[650,895],[682,855],[700,780],[750,650],[767,620],[785,600],[818,575],[850,480],[885,380],[915,290],[950,190],[985,20]]).concat([[1399,292],[1419,270],[1440,258],[1454,255],[1465,255]]), Y, 3);
  poly([[1465,255],[1477,257],[1488,283],[1500,300],[1513,317],[1524,337],[1536,343],[1549,367],[1563,387],[1577,400],[1588,410],[1598,413]].concat(B([[1300,450],[1325,570],[1345,690],[1365,770],[1381,808]])), BL, 3);

  // slow line
  poly(A([[12,440],[50,425],[100,412],[150,400],[200,375],[250,350],[290,305],[335,265],[375,245],[415,240],[450,210],[490,190],[520,180],[550,180]]), RR, 3);
  poly(A([[550,180],[590,200],[650,255],[683,258],[730,315],[765,350],[810,405],[860,470],[910,525],[945,542],[975,560],[1015,615],[1060,650],[1100,668],[1138,688]]), G, 3);
  poly(A([[1138,688],[1190,692]]), RR, 3);
  poly(A([[1190,692],[1215,697],[1245,715]]), G, 3);
  poly(A([[1245,715],[1290,705],[1325,728]]), RR, 3);
  poly(A([[1325,728],[1380,742],[1433,780]]), G, 3);
  poly(A([[1433,780],[1490,738],[1541,718],[1568,700]]).concat(B([[30,645],[70,570],[100,530],[140,470],[185,410],[230,320],[270,262],[288,270]])), RR, 3);
  poly(B([[288,270],[330,305],[375,352],[405,405],[425,412]]), G, 3);
  poly(B([[425,412],[458,412]]), RR, 3);
  poly(B([[458,412],[490,430],[525,490],[560,545],[595,595],[620,615],[660,625],[700,655],[750,672],[790,690],[820,707]]), G, 3);
  poly(B([[820,707],[838,707],[865,665],[900,570],[935,490],[975,380],[1020,260],[1060,165],[1100,105],[1140,80],[1190,38],[1210,45]]), RR, 3);
  poly(B([[1210,45],[1280,115],[1315,200],[1345,320],[1381,445]]), G, 3);

  // signals
  [[30,472,'m','★加仓'],[126,517,'m','★加仓'],[259,571,'y','★短买'],[390,656,'m','★加仓'],
   [856,556,'y','★短买'],[928,556,'m','★加仓'],[892,567,'y','★短买'],[1000,547,'m','★加仓'],
   [1502,517,'y','★短买'],[1574,556,'y','★短买']].forEach(function (s) {
    el('text', { x: s[0], y: s[1] + 6, 'class': 'sig ' + s[2] }, s[3]);
  });
  var clip = el('clipPath', { id: 'cut' });
  el('rect', { x: 1640, y: 730, width: 80, height: 15 }, null, clip);
  el('text', { x: 1659, y: 750, 'class': 'sig y', 'clip-path': 'url(#cut)' }, '▲短买');

  el('text', { x: 0, y: 740, 'class': 'g-gray' }, '用到未来数据');
  el('text', { x: 644, y: 762, 'class': 'g-s' }, 'S');
  el('rect', { x: 1182, y: 751, width: 18, height: 12, fill: '#0a7a1a' });
  el('text', { x: 1184, y: 761, 'class': 'g-box' }, 'W%');
  el('rect', { x: 1598, y: 751, width: 18, height: 12, fill: '#144a8a' });
  el('text', { x: 1600, y: 761, 'class': 'g-box' }, 'W%');

  // high marker
  el('path', { d: 'M209 108 V98 L226 106 M209 98 L216 103', fill: 'none', stroke: '#aaa', 'stroke-width': 1 });
  el('text', { x: 230, y: 113, 'class': 'g-top' }, '6.85');

  // corner icons
  el('path', { d: 'M1669 73 L1677 82 L1669 91 L1661 82 Z', fill: 'none', stroke: '#777', 'stroke-width': 1 });
  el('rect', { x: 1688, y: 73, width: 17, height: 16, rx: 3, fill: 'none', stroke: '#777', 'stroke-width': 1.6 });
  el('rect', { x: 1697, y: 76, width: 5, height: 10, fill: '#777' });

  // volume: y of the top of each bar, traced
  var volTop = [1210,1175,985,1175,1115,1295,1238,1247,1350,1260,526,656,1066,1083,1222,1106,1034,605,889,1160,1073,1296,1195,1336,1308,1165,646,953,1183,1209,1309,1124,989,1272,1237,778,926,1003,1100,1296,1232,1245,1332,1165,1178,1277,1325,1322,1255,1187,1292,1326,1332,1299,102,764,913,1003,886,1052,978,1088,1120,1272,1345,1326,1277,1305,1295,1313,1290,1274,1304,1222,1314,
    1328,1228,1201,1286,1350,1350,1367,1310,1242,1067,1092,1227,1191,1191,1224,1160,1292,1332,1349,1368,1287,1062,1049,1209,1229,1278,1340,1272,1265,1349,1350,1341,1265,715,828,814,1083,1138,1223,1147,792,1000,1057,1183,1205,1286,1304,1290,1336,1295,1250,1254,1349,1332,1287,1358,1322,1353,1322,903,858,1043,935,1101,1003];
  var cyanIdx = [3,4,9,13,14,17,18,19,20,22,24,26,29,33,36,38,40,41,44,46,47,49,51,53,61,62,63,65,66,68,69,70,72,73,78,80,81,85,86,87,88,89,90,93,98,101,102,104,111,116,119,121,122,124,127,129,130,132,134,135,137,138];
  volTop.forEach(function (p, idx) {
    var top = 760 + p / 3, x = X(idx), h = 1273 - top;
    if (cyanIdx.indexOf(idx) >= 0) {
      el('rect', { x: x - 3.5, y: top, width: 7, height: h, fill: CYAN, 'shape-rendering': 'crispEdges' });
    } else {
      el('rect', { x: x - 3, y: top + 0.5, width: 6, height: h, fill: 'none', stroke: RED, 'stroke-width': 1.3, 'shape-rendering': 'crispEdges' });
    }
  });

  var C = function (p) { return p.map(function (q) { return [q[0] / 1.742, 760 + q[1] / 3]; }); };
  var D = function (p) { return p.map(function (q) { return [900 + q[0] / 1.742, 760 + q[1] / 3]; }); };
  var ma5 = C([[9,1238],[30,1255],[51,1195],[72,1172],[92,1130],[113,1145],[134,1160],[155,1210],[176,1245],[197,1275],[218,1120],[239,1005],[260,970],[281,917],[302,912],[323,1030],[344,1105],[364,1010],[385,970],[406,960],[427,953],[448,1015],[469,1130],[490,1215],[511,1240],[532,1260],[552,1130],[573,1085],[594,1055],[615,1030],[636,1060],[657,1160],[678,1165],[699,1180],[720,1188],[740,1070],[760,1040],[780,1045],[801,1008],[822,1020],[843,1115],[864,1190],[885,1243],[905,1258],[926,1237],[947,1245],[968,1255],[989,1256],[1010,1273],[1031,1273],[1052,1278],[1072,1278],[1093,1278],[1114,1285],[1135,1080],[1156,960],[1177,870],[1198,810],[1219,733],[1240,920],[1260,965],[1281,1005],[1302,1025],[1323,1110],[1344,1160],[1365,1230],[1386,1270],[1407,1305],[1428,1308],[1449,1305],[1470,1297],[1491,1297],[1509,1295],[1530,1282],[1551,1282]])
    .concat(D([[5,1295],[26,1275],[47,1260],[68,1272],[88,1278],[109,1285],[130,1315],[151,1332],[172,1320],[193,1250],[213,1205],[233,1175],[254,1160],[275,1155],[296,1188],[317,1195],[338,1215],[359,1245],[380,1275],[401,1300],[422,1327],[443,1280],[463,1225],[484,1195],[505,1167],[526,1163],[547,1220],[568,1262],[589,1275],[610,1300],[631,1315],[652,1315],[671,1315],[691,1200],[712,1100],[733,990],[754,935],[775,918],[796,1015],[816,1078],[837,1075],[858,1058],[879,1042],[900,1035],[921,1048],[942,1140],[962,1210],[983,1260],[1004,1285],[1025,1302],[1046,1298],[1067,1288],[1088,1295],[1109,1295],[1130,1302],[1151,1323],[1172,1333],[1193,1333],[1214,1325],[1235,1250],[1255,1135],[1276,1090],[1297,1010],[1318,967],[1336,987]]));
  var ma10 = C([[9,1115],[30,1122],[51,1105],[72,1102],[92,1160],[113,1190],[134,1205],[155,1205],[176,1210],[197,1205],[218,1130],[239,1085],[260,1092],[281,1087],[302,1095],[323,1075],[344,1055],[364,985],[385,940],[406,935],[427,990],[448,1052],[469,1070],[490,1092],[511,1100],[532,1107],[552,1068],[573,1105],[594,1133],[615,1140],[636,1160],[657,1140],[678,1122],[699,1115],[720,1110],[740,1075],[760,1100],[780,1103],[801,1098],[822,1103],[843,1098],[864,1110],[885,1142],[905,1132],[926,1125],[947,1175],[968,1215],[989,1248],[1010,1268],[1031,1252],[1052,1258],[1072,1268],[1093,1268],[1114,1282],[1135,1170],[1156,1115],[1177,1072],[1198,1040],[1219,1012],[1240,1000],[1260,970],[1281,938],[1302,920],[1323,917],[1344,1040],[1365,1100],[1386,1135],[1407,1170],[1428,1210],[1449,1240],[1470,1272],[1491,1280],[1509,1300],[1530,1295],[1551,1292]])
    .concat(D([[5,1290],[26,1285],[47,1278],[68,1278],[88,1282],[109,1285],[130,1295],[151,1296],[172,1296],[193,1270],[213,1252],[233,1250],[254,1250],[275,1235],[296,1230],[317,1207],[338,1202],[359,1202],[380,1215],[401,1242],[422,1265],[443,1245],[463,1233],[484,1233],[505,1233],[526,1247],[547,1252],[568,1248],[589,1238],[610,1233],[631,1240],[652,1265],[671,1295],[691,1240],[712,1200],[733,1150],[754,1130],[775,1115],[796,1110],[816,1090],[837,1030],[858,1000],[879,980],[900,1030],[921,1065],[942,1115],[962,1135],[983,1150],[1004,1160],[1025,1175],[1046,1225],[1067,1250],[1088,1280],[1109,1290],[1130,1300],[1151,1305],[1172,1310],[1193,1314],[1214,1315],[1235,1265],[1255,1225],[1276,1212],[1297,1165],[1318,1150],[1336,1125]]));
  poly(ma5, '#e4e4e4', 1.3);
  poly(ma10, '#dcdc00', 1.6);

  // frame lines
  line(0, 764.5, 1787, 764.5, '#c00000', 2);
  line(1711.5, 67, 1711.5, 1282, DARK, 2);
  line(0, 1282.5, 1787, 1282.5, DARK, 2);
  line(0, 1305.5, 1787, 1305.5, DARK, 2);

  // price axis
  ['6.80','6.70','6.60','6.50','6.40','6.30','6.20','6.10','6.00','5.90','5.80','5.70','5.60'].forEach(function (t, k) {
    var yy = 123.5 + 51 * k;
    line(1712, yy, 1720, yy, DARK, 1);
    el('text', { x: 1743, y: yy + 8, 'class': 'g-text' }, t);
  });
  // volume axis
  ['55000','50000','45000','40000','35000','30000','25000','20000','15000','10000','5000'].forEach(function (t, k) {
    var yy = 796 + 43.4 * k;
    line(1712, yy, 1720, yy, DARK, 1);
    line(1712, yy + 21.7, 1716, yy + 21.7, DARK, 1);
    el('text', { x: 1778, y: yy + 8, 'class': 'g-text', 'text-anchor': 'end' }, t);
  });
  el('rect', { x: 1713, y: 882.5, width: 73, height: 22, fill: '#000080', stroke: '#c00000', 'stroke-width': 1 });
  el('text', { x: 1713, y: 899, 'class': 'g-sel' }, '42396');
  el('rect', { x: 1713.5, y: 1260.5, width: 36, height: 21, fill: 'none', stroke: '#c00000', 'stroke-width': 1 });
  el('text', { x: 1716, y: 1278, 'class': 'g-date' }, 'X10');

  // time axis
  el('text', { x: 5, y: 1300, 'class': 'g-date' }, '2023年');
  [[160,'3'],[434,'4'],[662,'5'],[1141,'7'],[1391,'8'],[1669,'9']].forEach(function (d) {
    line(d[0] + 0.5, 1283, d[0] + 0.5, 1305, DARK, 2);
    el('text', { x: d[0] + 3, y: 1300, 'class': 'g-date' }, d[1]);
  });
  [229,297,365,490,548,605,722,782,961,1021,1080,1203,1266,1328].forEach(function (x) { line(x + 0.5, 1283, x + 0.5, 1287, DARK, 1); });
  el('rect', { x: 807, y: 1283.5, width: 117, height: 21, fill: '#000080', stroke: '#c00000', 'stroke-width': 1 });
  el('text', { x: 809, y: 1300, 'class': 'g-sel' }, '2023/05/22/一');
  line(1711.5, 1283, 1711.5, 1305, DARK, 2);
  el('text', { x: 1727, y: 1300, 'class': 'g-lab' }, '日线');
})();
```
